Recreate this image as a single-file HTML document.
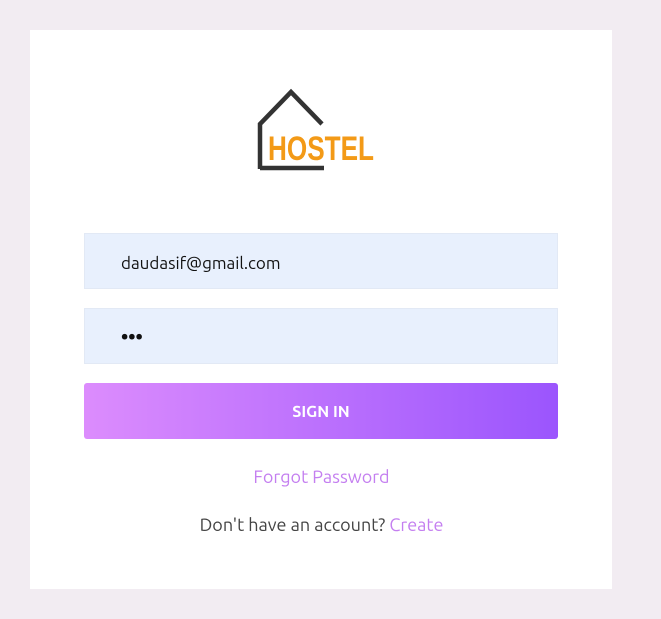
<!DOCTYPE html>
<html><head><style>
body{margin:0;width:661px;height:619px;background:#f2ecf2;font-family:"Ubuntu","Liberation Sans",sans-serif;position:relative;overflow:hidden}
.card{position:absolute;left:30px;top:30px;width:582px;height:559px;background:#fff}
.in{position:absolute;left:84px;width:474px;height:56px;background:#e8f0fd;border:1px solid #e2e9f5;box-sizing:border-box;font-size:17px;color:#111;line-height:56px;padding-left:36px}
.btn{position:absolute;left:84px;top:383px;width:474px;height:56px;border-radius:3px;background:linear-gradient(90deg,#dc8cfd,#9b55fd);color:#fff;font-weight:bold;font-size:16px;text-align:center;line-height:58px}
.t{position:absolute;width:661px;text-align:center;font-size:18px}
</style></head><body>
<div class="card"></div>
<svg style="position:absolute;left:0;top:0" width="661" height="200">
<path d="M260 169 V124 L291 92 L322 124 M260 168 H324" fill="none" stroke="#333" stroke-width="4.5"/>
<text x="268" y="160" font-family="Ubuntu Condensed,Liberation Sans Narrow,sans-serif" font-weight="bold" font-size="34" fill="#f39a17" textLength="106" lengthAdjust="spacingAndGlyphs">HOSTEL</text>
</svg>
<div class="in" style="top:233px;line-height:59px">daudasif@gmail.com</div>
<div class="in" style="top:308px;font-size:20px;font-weight:bold;line-height:56px">•••</div>
<div class="btn">SIGN IN</div>
<div class="t" style="top:467px;color:#c47ff0;left:-9px">Forgot Password</div>
<div class="t" style="top:515px;color:#444;left:-9px">Don't have an account? <span style="color:#c47ff0">Create</span></div>
</body></html>
